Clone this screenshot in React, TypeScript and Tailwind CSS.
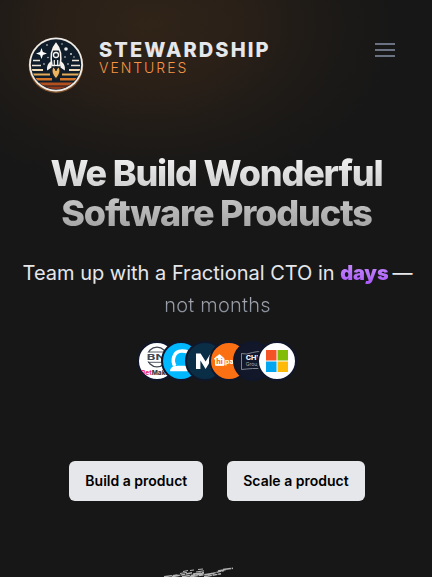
import React from "react";

function RocketLogo() {
  return (
    <svg viewBox="0 0 56 56" className="size-14 overflow-visible" aria-label="Stewardship Ventures logo">
      <defs>
        <clipPath id="badge"><circle cx="28" cy="27.500" r="24.600" /></clipPath>
      </defs>
      <circle cx="28" cy="28.600" r="27.300" fill="#b5713a" opacity=".65" />
      <circle cx="28" cy="27.500" r="27" fill="#f1ece6" />
      <circle cx="28" cy="27.500" r="25.200" fill="#0e1d29" />
      <g clipPath="url(#badge)">
        <path d="M5 23.500h7M4 28.500h9M44 23.500h7M43 28.500h9" stroke="#e9e1d5" strokeWidth="1.500" />
        <path d="M3 33h12M41 33h12" stroke="#f3dcb5" strokeWidth="1.800" />
        <path d="M3 37.500h19M34 37.500h19" stroke="#e3ab58" strokeWidth="2.200" />
        <path d="M3 42.300h21M32 42.300h21" stroke="#d3762a" strokeWidth="2.600" />
        <path d="M3 47h50" stroke="#b3501f" strokeWidth="3.200" />
        <path d="M3 51h50" stroke="#953b1a" strokeWidth="3" />
        <path d="M13.500 11l1.400 4.100 4.100 1.400-4.100 1.400L13.500 22l-1.400-4.100L8 16.500l4.100-1.400z" fill="#fff" />
        <g fill="#e5e7e8">
          <circle cx="38" cy="12" r="1.800" /><circle cx="19" cy="8" r=".8" />
          <circle cx="43" cy="17" r=".9" /><circle cx="46" cy="20" r=".7" />
          <circle cx="20" cy="20.500" r=".7" /><circle cx="37" cy="20" r=".8" />
          <circle cx="16" cy="27" r=".8" /><circle cx="40" cy="27" r=".8" />
          <circle cx="34" cy="7" r=".7" />
        </g>
      </g>
      <path d="M23.500 24c-3.500 2-5 5.500-4.300 9.500l4.300-3zM32.500 24c3.500 2 5 5.500 4.300 9.500l-4.300-3z" fill="#f6f3ee" />
      <path d="M28 6.500c-4 4.500-6 12-4 22h8c2-10 0-17.500-4-22z" fill="#0e1d29" stroke="#f6f3ee" strokeWidth="1.500" />
      <path d="M28 6.500c-1.800 2-3 4.500-3.600 7h7.200C31 11 29.800 8.500 28 6.500z" fill="#f6f3ee" />
      <circle cx="28" cy="18" r="2.500" fill="#0e1d29" stroke="#f6f3ee" strokeWidth="1.300" />
      <path d="M26.300 23v6M29.700 23v6" stroke="#f6f3ee" strokeWidth="1.200" />
      <path d="M24 30.500c-2 5.500 1 9 4 12.500 3-3.500 6-7 4-12.500z" fill="#28221f" />
      <path d="M25.300 30.500c-2 4.500.7 8 2.700 10.500 2-2.500 4.700-6 2.700-10.500l-2.700 3z" fill="#edb45f" />
      <path d="M28 29v5" stroke="#0e1d29" strokeWidth="1.200" />
    </svg>
  );
}

const avatar = "size-10 shrink-0 rounded-full border-2 border-[#10172a] overflow-hidden";

function Clients() {
  return (
    <div className="flex justify-center -space-x-4 pl-0.5">
      <svg viewBox="0 0 36 36" className={`${avatar} bg-white`}>
        <circle cx="18" cy="14" r="9.800" fill="none" stroke="#414854" strokeWidth="1.300" />
        <rect x="6" y="9.500" width="22" height="9" fill="#fff" />
        <text x="7.800" y="17.300" fontSize="8" textLength="18.500" lengthAdjust="spacingAndGlyphs" fontFamily="Inter" fontWeight="700" fill="#414854">BN</text>
        <path d="M10 9h16M9 19.300h17" stroke="#414854" strokeWidth=".9" />
        <text x="2" y="32.300" fontSize="6.500" fontFamily="Inter" fontWeight="800" fill="#ed2f79">Bet<tspan fill="#343a46">Makers</tspan></text>
      </svg>
      <svg viewBox="0 0 36 36" className={`${avatar} bg-[#00b8ff]`}>
        <path d="M12 23C9 19 9.500 8 19 8s11 5 10 11-5 5.500-10 5.500h-5" fill="none" stroke="#fff" strokeWidth="3.600" />
        <path d="M7 28.300c0-3 2-4.800 5-5.300h16v3.500c-2 1.500-4 1.800-6 1.800z" fill="#fff" />
      </svg>
      <svg viewBox="0 0 36 36" className={`${avatar} bg-[#0a2e45]`}>
        <path d="M9 26V10.500h4.600l5 8 5-8h4.600V26h-4.400v-8.500L18.600 26l-5.200-8.500V26z" fill="#fff" />
      </svg>
      <svg viewBox="0 0 36 36" className={`${avatar} bg-[#fc7014]`}>
        <path d="M3.500 15.500l5-4 4.500 4v6.800H4.500v-5z" fill="#fff" stroke="#fff" strokeLinejoin="round" />
        <text x="5.300" y="21" fontSize="7" fontFamily="Inter" fontWeight="800" fill="#fc7014">hi</text>
        <text x="14" y="20.700" fontSize="7" fontFamily="Inter" fontWeight="700" fill="#fff">pages</text>
      </svg>
      <svg viewBox="0 0 36 36" className={`${avatar} bg-[#12172a]`}>
        <path d="M6.500 26.500V10.500q5 1.500 11-1t11 1v16q-5-1.500-11-1t-11 1" fill="none" stroke="#9c9fa8" strokeWidth=".8" />
        <text x="10.700" y="17.400" fontSize="6.500" textLength="18.500" lengthAdjust="spacingAndGlyphs" fontFamily="Inter" fontWeight="800" fill="#f0f1f3">CHW</text>
        <text x="10.700" y="23.300" fontSize="5" fontFamily="Inter" fill="#a4a7b0">Group</text>
      </svg>
      <svg viewBox="0 0 36 36" className={`${avatar} bg-white`}>
        <path d="M7 7h10.500v10.500H7z" fill="#f35325" />
        <path d="M18.500 7H29v10.500H18.500z" fill="#81bc06" />
        <path d="M7 18.500h10.500V29H7z" fill="#05a6f0" />
        <path d="M18.500 18.500H29V29H18.500z" fill="#ffba08" />
      </svg>
    </div>
  );
}

export default function App() {
  return (
    <div className="h-[577px] w-[432px] overflow-hidden bg-[#171717] bg-[radial-gradient(ellipse_250px_170px_at_150px_25px,#302418_0%,#2a2018_35%,#1d1a17_70%,#171717_100%)] font-['Inter',sans-serif] antialiased">
      <header className="flex h-[113px] items-start justify-between pt-[37px] pr-[37px] pl-7">
        <div className="flex gap-[15px]">
          <RocketLogo />
          <div className="flex flex-col pt-[3px]">
            <span className="text-xl leading-5 font-extrabold tracking-[2.1px] text-[#e5e7eb]">STEWARDSHIP</span>
            <span className="text-sm leading-4 font-light tracking-[1.95px] text-[#f79545]">VENTURES</span>
          </div>
        </div>
        <button className="mt-1.5 flex w-5 flex-col gap-1" aria-label="Menu">
          <span className="h-0.5 bg-gray-500" />
          <span className="h-0.5 bg-gray-500" />
          <span className="h-0.5 bg-gray-500" />
        </button>
      </header>
      <main className="flex flex-col pt-10 text-center">
        <h1 className="bg-gradient-to-b from-[#f5f5f5] to-[#a0a0a0] bg-clip-text pl-px text-4xl leading-10 font-extrabold tracking-[-1.2px] text-transparent">
          We Build Wonderful<br />Software Products
        </h1>
        <p className="mt-6 pl-[3px] text-xl leading-8 whitespace-nowrap text-[#e5e7eb]">
          Team up with a Fractional CTO in{" "}
          <span className="bg-gradient-to-b from-[#c890fb] to-[#a955f7] bg-clip-text font-black tracking-[-0.2px] text-transparent">days</span><span className="pl-1">—</span><br />
          <span className="bg-gradient-to-b from-[#b4b7bd] to-[#7d8594] bg-clip-text font-light tracking-[0.2px] text-transparent">not months</span>
        </p>
        <div className="mt-5"><Clients /></div>
        <div className="mt-20 flex justify-center gap-6 pl-0.5">
          <button className="h-10 rounded-md bg-gray-200 px-4 text-sm font-semibold text-black">Build a product</button>
          <button className="h-10 rounded-md bg-gray-200 px-4 text-sm font-semibold text-black">Scale a product</button>
        </div>
        <svg viewBox="0 0 80 10" className="mt-[66px] ml-40 h-2.5 w-20" fill="none" stroke="#b4b4b4">
          <path d="M4 9.800l14-2M12 9.800l20-4M22 9.800l22-3.500M30 9.800l24-3.500M44 9.800l17-3M33 7l11-1.500M48 7.500l16-4M58 4l8-1.500M63 2.500l10-1.200" strokeWidth="1.400" strokeDasharray="8 .7 5 .7" />
          <path d="M23 4.500l5-1M30 3.500l4-.5M38 2.500l5-.5M20 6.500l7-1.200M36 5l8-1.200" />
        </svg>
      </main>
    </div>
  );
}
